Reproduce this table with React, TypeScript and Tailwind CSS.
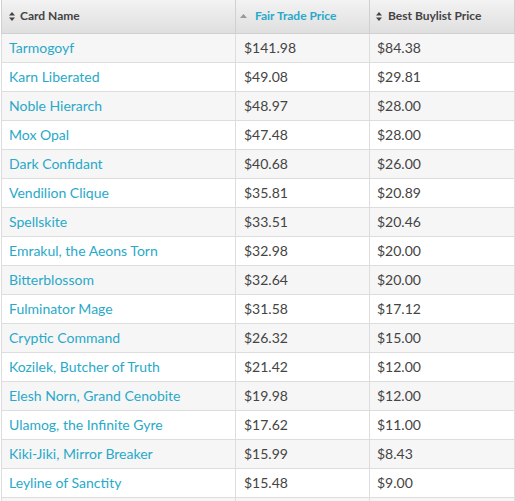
import React from "react";

const rows: [string, string, string][] = [
  ["Tarmogoyf", "$141.98", "$84.38"],
  ["Karn Liberated", "$49.08", "$29.81"],
  ["Noble Hierarch", "$48.97", "$28.00"],
  ["Mox Opal", "$47.48", "$28.00"],
  ["Dark Confidant", "$40.68", "$26.00"],
  ["Vendilion Clique", "$35.81", "$20.89"],
  ["Spellskite", "$33.51", "$20.46"],
  ["Emrakul, the Aeons Torn", "$32.98", "$20.00"],
  ["Bitterblossom", "$32.64", "$20.00"],
  ["Fulminator Mage", "$31.58", "$17.12"],
  ["Cryptic Command", "$26.32", "$15.00"],
  ["Kozilek, Butcher of Truth", "$21.42", "$12.00"],
  ["Elesh Norn, Grand Cenobite", "$19.98", "$12.00"],
  ["Ulamog, the Infinite Gyre", "$17.62", "$11.00"],
  ["Kiki-Jiki, Mirror Breaker", "$15.99", "$8.43"],
  ["Leyline of Sanctity", "$15.48", "$9.00"],
  ["", "", ""],
];

function BothSort() {
  return (
    <svg width="6" height="9" viewBox="0 0 6 9" className="shrink-0">
      <path d="M0 3.5 L3 0 L6 3.5 Z" fill="#444" />
      <path d="M0 5.5 L3 9 L6 5.5 Z" fill="#444" />
    </svg>
  );
}

function UpSort() {
  return (
    <svg width="7" height="4" viewBox="0 0 7 4" className="shrink-0">
      <path d="M0 4 L3.5 0 L7 4 Z" fill="#999" />
    </svg>
  );
}

export default function App() {
  return (
    <div className="w-[515px] h-[501px] overflow-hidden bg-white" style={{ fontFamily: "Lato, 'Open Sans', sans-serif" }}>
      <table className="ml-px border-collapse table-fixed w-[513px] text-[14px]">
        <colgroup>
          <col className="w-[234px]" />
          <col className="w-[134px]" />
          <col className="w-[145px]" />
        </colgroup>
        <thead>
          <tr className="h-[33px] bg-gradient-to-b from-[#f3f3f3] to-[#dfdfdf]">
            <th className="border-x border-b border-[#d0d0d0] border-t-0 pl-[7px] pr-2 text-left font-bold text-[12px] text-[#444]">
              <div className="flex items-center gap-[5px]">
                <BothSort />
                <span>Card Name</span>
              </div>
            </th>
            <th className="border-x border-b border-[#d0d0d0] pl-[4px] pr-2 text-left font-bold text-[12px] text-[#29a9c9]">
              <div className="flex items-center gap-[8px]">
                <UpSort />
                <span>Fair Trade Price</span>
              </div>
            </th>
            <th className="border-x border-b border-[#d0d0d0] pl-[6px] pr-2 text-left font-bold text-[12px] text-[#444]">
              <div className="flex items-center gap-[6px]">
                <BothSort />
                <span>Best Buylist Price</span>
              </div>
            </th>
          </tr>
        </thead>
        <tbody>
          {rows.map(([name, fair, buy], i) => (
            <tr key={i} className={`h-[29px] ${i % 2 === 0 ? "bg-[#f6f6f6]" : "bg-white"}`}>
              <td className="border border-[#dddddd] pl-[7px] pr-2 text-[#29a9c9] whitespace-nowrap">{name}</td>
              <td className="border border-[#dddddd] pl-2 pr-2 text-[#444]">{fair}</td>
              <td className="border border-[#dddddd] pl-[7px] pr-2 text-[#444]">{buy}</td>
            </tr>
          ))}
        </tbody>
      </table>
    </div>
  );
}
